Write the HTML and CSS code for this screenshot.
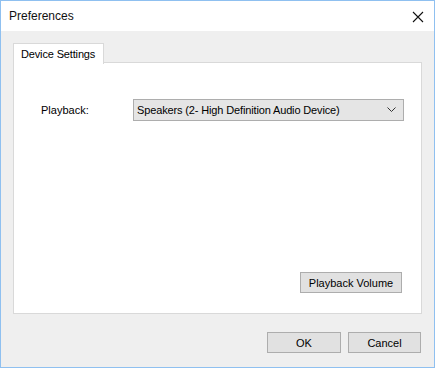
FILE: index.html
```html
<!DOCTYPE html>
<html>
<head>
<meta charset="utf-8">
<link rel="stylesheet" href="styles.css">
</head>
<body>
<div class="window">
  <div class="titlebar">
    <span class="title">Preferences</span>
    <svg class="close" width="12" height="12" viewBox="0 0 12 12"><path d="M1 1L11 11M11 1L1 11" stroke="#111" stroke-width="1.1" fill="none"/></svg>
  </div>
  <div class="content">
    <div class="tabs">
      <div class="tab">Device Settings</div>
    </div>
    <div class="panel">
      <div class="row">
        <span class="label">Playback:</span>
        <div class="combo">
          <span>Speakers (2- High Definition Audio Device)</span>
          <svg class="chev" width="9" height="6" viewBox="0 0 9 6"><path d="M0.5 0.5L4.5 4.5L8.5 0.5" stroke="#333" stroke-width="1" fill="none"/></svg>
        </div>
      </div>
      <div class="spacer"></div>
      <div class="vol-row"><button class="btn vol">Playback Volume</button></div>
    </div>
    <div class="footer">
      <button class="btn ok">OK</button>
      <button class="btn cancel">Cancel</button>
    </div>
  </div>
</div>
</body>
</html>
```

FILE: styles.css
```css
html, body { margin: 0; padding: 0; background: #f0f0f0; }
body { font-family: "Liberation Sans", Arial, sans-serif; font-size: 11px; color: #000; }
.window {
  width: 435px; height: 368px; box-sizing: border-box;
  border: 1px solid #8fc0f0; background: #efefef;
  display: flex; flex-direction: column;
}
.titlebar {
  height: 30px; background: #fff; display: flex; align-items: center;
  justify-content: space-between; padding: 0 10px 0 8px;
}
.title { font-size: 12px; color: #111; }
.close { display: block; margin-top: 1px; }
.content { flex: 1; display: flex; flex-direction: column; padding: 12px 12px 13px 12px; }
.tabs { display: flex; height: 20px; position: relative; z-index: 1; margin-bottom: -1px; }
.tab {
  width: 91px; box-sizing: border-box; height: 21px;
  background: #fff; border: 1px solid #d9d9d9; border-bottom: none;
  padding: 4px 0 0 7px; white-space: nowrap; letter-spacing: -0.15px;
}
.panel {
  height: 252px; box-sizing: border-box; background: #fff;
  border: 1px solid #d9d9d9; display: flex; flex-direction: column;
  padding: 36px 17px 20px 27px;
}
.row { display: flex; align-items: center; }
.label { width: 92px; }
.combo {
  flex: 1; height: 22px; box-sizing: border-box; background: #e5e5e5;
  border: 1px solid #adadad; display: flex; align-items: center;
  justify-content: space-between; padding: 0 7px 0 3px; white-space: nowrap;
  letter-spacing: -0.14px;
}
.chev { display: block; }
.spacer { flex: 1; }
.vol-row { display: flex; justify-content: flex-end; padding-right: 2px; }
.btn {
  font-family: "Liberation Sans", Arial, sans-serif; font-size: 11px; color: #000;
  background: #e1e1e1; border: 1px solid #adadad; height: 21px; box-sizing: border-box;
  padding: 0; margin: 0;
}
.vol { width: 102px; }
.footer { display: flex; justify-content: flex-end; gap: 7px; margin-top: 18px; padding-right: 1px; }
.ok { width: 74px; }
.cancel { width: 73px; }
```
